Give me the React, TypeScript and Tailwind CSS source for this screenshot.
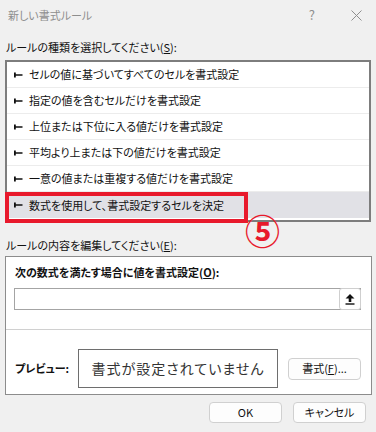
const font = "[font-family:'Noto_Sans_CJK_JP','Noto_Sans',sans-serif] [font-feature-settings:'palt']";

const rules = [
  "セルの値に基づいてすべてのセルを書式設定",
  "指定の値を含むセルだけを書式設定",
  "上位または下位に入る値だけを書式設定",
  "平均より上または下の値だけを書式設定",
  "一意の値または重複する値だけを書式設定",
  "数式を使用して、書式設定するセルを決定",
];

function Marker() {
  return (
    <svg width="9" height="6" viewBox="0 0 9 6" className="shrink-0">
      <path d="M0 0.5 L1.8 0.5 L1.8 2.3 L8.5 2.3 L8.5 3.7 L1.8 3.7 L1.8 5.5 L0 5.5 Z" fill="#111" />
    </svg>
  );
}

export default function App() {
  return (
    <div className={`relative h-[432px] w-[376px] overflow-hidden bg-[#f0f0f0] text-[11px] text-[#111] ${font}`}>
      {/* title bar */}
      <div className="flex h-[30px] items-center pl-[8px] pr-[14px]">
        <span className="flex-1 text-[11px] text-[#8e8e8e]">新しい書式ルール</span>
        <span className="mr-[36px] text-[13px] text-[#8e8e8e]">?</span>
        <svg width="11" height="11" viewBox="0 0 11 11">
          <path d="M0.5 0.5 L10.5 10.5 M10.5 0.5 L0.5 10.5" stroke="#8e8e8e" strokeWidth="1" />
        </svg>
      </div>

      <div className="mt-[9px] h-[16px] pl-[6px] leading-[16px]">
        ルールの種類を選択してください(<span className="underline">S</span>):
      </div>

      {/* rule list */}
      <div className="mx-[5px] mt-[5px] w-[366px] border-2 border-[#7d7d7d] bg-white pb-[2px]">
        {rules.map((r, i) => (
          <div
            key={r}
            className={
              i === rules.length - 1
                ? "flex h-[26px] items-center gap-[6px] bg-[#e1e1e6] pl-[7px]"
                : "flex h-[26px] items-center gap-[6px] border-b border-[#ececec] pl-[7px]"
            }
          >
            <Marker />
            <span>{r}</span>
          </div>
        ))}
      </div>

      <div className="mt-[15px] h-[16px] pl-[6px] leading-[16px]">
        ルールの内容を編集してください(<span className="underline">E</span>):
      </div>

      {/* rule description panel */}
      <div className="mx-[5px] mt-[3px] h-[139px] w-[367px] border border-[#8c8c8c] bg-white">
        <div className="mt-[7px] h-[16px] pl-[9px] font-bold leading-[16px]">
          次の数式を満たす場合に値を書式設定(<span className="underline">O</span>):
        </div>
        <div className="ml-[8px] mt-[8px] flex h-[22px] w-[347px] border border-[#a4a4a4]">
          <div className="flex-1" />
          <div className="-m-px flex w-[22px] items-center justify-center rounded-[3px] border border-[#cfcfcf] bg-white">
            <svg width="10" height="12" viewBox="0 0 10 12">
              <path d="M5 1 L9.5 5.5 L6.3 5.5 L6.3 9 L3.7 9 L3.7 5.5 L0.5 5.5 Z" fill="#111" />
              <rect x="0.5" y="10.3" width="9" height="1.4" fill="#111" />
            </svg>
          </div>
        </div>
        <div className="mt-[19px] h-px w-full bg-[#d0d0d0]" />
        <div className="mt-[19px] flex items-center">
          <span className="w-[72px] pl-[9px] font-bold">プレビュー:</span>
          <div className="flex h-[39px] w-[200px] items-center justify-center border border-[#6e6e6e] text-[14px] tracking-[1px] text-[#333]">
            書式が設定されていません
          </div>
          <button className="ml-[10px] flex h-[22px] w-[73px] items-center justify-center rounded-[4px] border border-[#d0d0d0] bg-[#fdfdfd]">
            書式(<span className="underline">F</span>)...
          </button>
        </div>
      </div>

      {/* bottom buttons */}
      <div className="mt-[7px] flex justify-end gap-[11px] pr-[10px]">
        <button className="flex h-[21px] w-[73px] items-center justify-center rounded-[4px] border border-[#d0d0d0] bg-[#fdfdfd]">
          OK
        </button>
        <button className="flex h-[21px] w-[73px] items-center justify-center rounded-[4px] border border-[#d0d0d0] bg-[#fdfdfd]">
          キャンセル
        </button>
      </div>

      {/* annotation overlay */}
      <div className="absolute left-[5px] top-[192px] h-[31px] w-[243px] border-4 border-[#e8192c]" />
      <div className="absolute left-[245px] top-[210px] text-[35px] font-bold leading-[40px] text-[#e8192c]">⑤</div>
    </div>
  );
}
